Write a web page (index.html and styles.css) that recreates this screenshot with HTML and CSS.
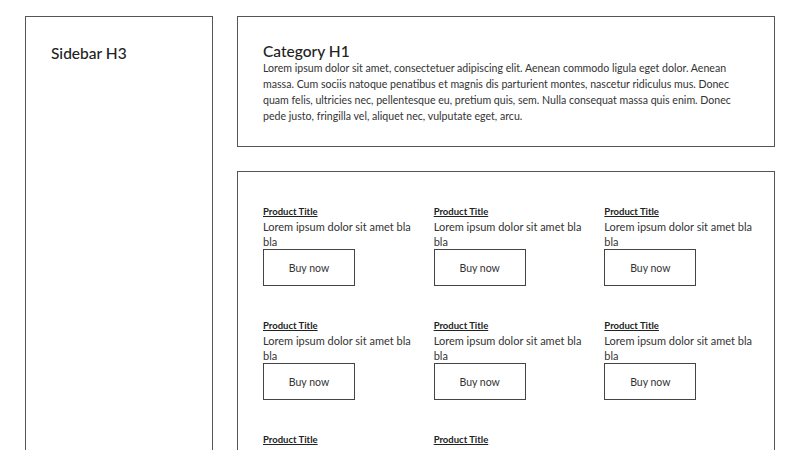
FILE: index.html
```html
<!DOCTYPE html>
<html lang="en">
<head>
<meta charset="utf-8">
<title>Category</title>
<link rel="stylesheet" href="styles.css">
</head>
<body>
<div class="page">
  <aside class="sidebar">
    <h3 class="sidebar-title">Sidebar H3</h3>
  </aside>
  <main class="main">
    <section class="category">
      <h1 class="category-title">Category H1</h1>
      <p class="category-text">Lorem ipsum dolor sit amet, consectetuer adipiscing elit. Aenean commodo ligula eget dolor. Aenean massa. Cum sociis natoque penatibus et magnis dis parturient montes, nascetur ridiculus mus. Donec quam felis, ultricies nec, pellentesque eu, pretium quis, sem. Nulla consequat massa quis enim. Donec pede justo, fringilla vel, aliquet nec, vulputate eget, arcu.</p>
    </section>
    <section class="products">
      <div class="product"><a class="product-title" href="#">Product Title</a><p class="product-desc">Lorem ipsum dolor sit amet bla bla</p><button class="buy">Buy now</button></div>
      <div class="product"><a class="product-title" href="#">Product Title</a><p class="product-desc">Lorem ipsum dolor sit amet bla bla</p><button class="buy">Buy now</button></div>
      <div class="product"><a class="product-title" href="#">Product Title</a><p class="product-desc">Lorem ipsum dolor sit amet bla bla</p><button class="buy">Buy now</button></div>
      <div class="product"><a class="product-title" href="#">Product Title</a><p class="product-desc">Lorem ipsum dolor sit amet bla bla</p><button class="buy">Buy now</button></div>
      <div class="product"><a class="product-title" href="#">Product Title</a><p class="product-desc">Lorem ipsum dolor sit amet bla bla</p><button class="buy">Buy now</button></div>
      <div class="product"><a class="product-title" href="#">Product Title</a><p class="product-desc">Lorem ipsum dolor sit amet bla bla</p><button class="buy">Buy now</button></div>
      <div class="product"><a class="product-title" href="#">Product Title</a><p class="product-desc">Lorem ipsum dolor sit amet bla bla</p><button class="buy">Buy now</button></div>
      <div class="product"><a class="product-title" href="#">Product Title</a><p class="product-desc">Lorem ipsum dolor sit amet bla bla</p><button class="buy">Buy now</button></div>
    </section>
  </main>
</div>
</body>
</html>
```
FILE: styles.css
```css
* { box-sizing: border-box; }
html, body { margin: 0; padding: 0; background: #fff; }
body {
  font-family: "Lato", "Noto Sans", sans-serif;
  color: #222;
  overflow: hidden;
}
.page {
  display: grid;
  grid-template-columns: 188px 1fr;
  column-gap: 24px;
  padding: 16px 25px 0 25px;
  align-items: stretch;
}
.sidebar {
  border: 1px solid #555;
  padding: 26px 25px;
  min-height: 700px;
}
.sidebar-title {
  margin: 0;
  font-size: 15.5px;
  font-weight: 500;
  line-height: 20px;
}
.main {
  display: flex;
  flex-direction: column;
  gap: 24px;
}
.category {
  border: 1px solid #555;
  padding: 25px 25px 26px 25px;
  height: 131px;
}
.category-title {
  margin: 0;
  font-size: 15.5px;
  font-weight: 500;
  line-height: 18px;
}
.category-text {
  margin: 0;
  font-size: 10.6px;
  line-height: 16px;
  color: #333;
}
.products {
  border: 1px solid #555;
  padding: 33px 9px 40px 25px;
  display: grid;
  grid-template-columns: repeat(3, 1fr);
  column-gap: 10px;
  row-gap: 33px;
}
.product {
  display: flex;
  flex-direction: column;
  align-items: flex-start;
}
.product-title {
  font-size: 9.5px;
  font-weight: 700;
  line-height: 14px;
  color: #222;
  text-decoration: underline;
}
.product-desc {
  margin: 0;
  font-size: 11px;
  line-height: 15px;
  color: #333;
}
.buy {
  margin-top: 0;
  width: 92px;
  height: 37px;
  background: #fff;
  border: 1px solid #444;
  font-family: inherit;
  font-size: 10.5px;
  color: #333;
  padding: 0;
  cursor: pointer;
}
```
